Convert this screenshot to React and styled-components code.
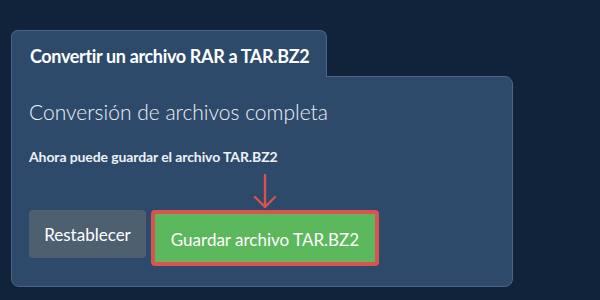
import React from "react";
import styled, { createGlobalStyle } from "styled-components";

const GlobalStyle = createGlobalStyle`
  html, body {
    margin: 0;
    padding: 0;
    background: #11233a;
    font-family: Lato, "Open Sans", sans-serif;
  }
`;

const Page = styled.div`
  width: 600px;
  height: 300px;
  padding: 30px 0 0 11px;
  box-sizing: border-box;
`;

const Card = styled.div`
  width: 502px;
  display: flex;
  flex-direction: column;
  align-items: flex-start;
`;

const Tab = styled.div`
  position: relative;
  z-index: 1;
  box-sizing: border-box;
  width: 316px;
  height: 47px;
  margin-bottom: -1px;
  padding: 14px 0 0 18px;
  background: #2d4a6b;
  border: 1px solid #4a6585;
  border-bottom: none;
  border-radius: 7px 7px 0 0;
  color: #ffffff;
  font-size: 18px;
  font-weight: 700;
  letter-spacing: -0.35px;
`;

const Panel = styled.div`
  box-sizing: border-box;
  width: 502px;
  height: 211px;
  padding: 21px 18px 0 17px;
  background: #2d4a6b;
  border: 1px solid #4a6585;
  border-radius: 0 8px 8px 8px;
`;

const Heading = styled.h2`
  margin: 0;
  color: #eef1f4;
  font-size: 21px;
  font-weight: 300;
  line-height: 28px;
`;

const Note = styled.p`
  margin: 22px 0 0 0;
  color: #eef1f4;
  font-size: 14px;
  font-weight: 700;
  line-height: 18px;
  letter-spacing: -0.1px;
`;

const ArrowRow = styled.div`
  display: flex;
  padding-left: 224px;
  height: 44px;
  align-items: flex-end;
`;

const Buttons = styled.div`
  display: flex;
  align-items: flex-start;
  gap: 5px;
`;

const Button = styled.button`
  box-sizing: border-box;
  border-radius: 4px;
  padding: 0;
  font-family: inherit;
  font-size: 17px;
  font-weight: 400;
  color: #ffffff;
  height: ${({ $primary }) => ($primary ? "56px" : "48px")};
  width: ${({ $primary }) => ($primary ? "228px" : "117px")};
  background: ${({ $primary }) => ($primary ? "#5cb85c" : "#4e5f70")};
  border: ${({ $primary }) => ($primary ? "4px solid #d9534f" : "none")};
  padding-top: ${({ $primary }) => ($primary ? "2px" : "0")};
`;

export default function App() {
  return (
    <>
      <GlobalStyle />
      <Page>
        <Card>
          <Tab>Convertir un archivo RAR a TAR.BZ2</Tab>
          <Panel>
            <Heading>Conversión de archivos completa</Heading>
            <Note>Ahora puede guardar el archivo TAR.BZ2</Note>
            <ArrowRow>
              <svg width="24" height="36" viewBox="0 0 24 36">
                <path
                  d="M12 1 V33 M2 23 L12 33 L22 23"
                  fill="none"
                  stroke="#d9534f"
                  strokeWidth="2.4"
                  strokeLinecap="round"
                  strokeLinejoin="round"
                />
              </svg>
            </ArrowRow>
            <Buttons>
              <Button>Restablecer</Button>
              <Button $primary>Guardar archivo TAR.BZ2</Button>
            </Buttons>
          </Panel>
        </Card>
      </Page>
    </>
  );
}
